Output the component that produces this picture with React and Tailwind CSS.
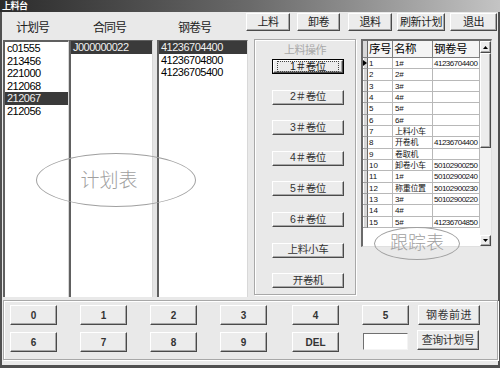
import React from "react";

const F = "font-['Liberation_Sans','Noto_Sans_CJK_SC',sans-serif]";

function Btn({ className = "", children }) {
  return (
    <div
      className={`flex items-center justify-center bg-[#ececec] border border-t-white border-l-white border-b-[#4a4a4a] border-r-[#4a4a4a] shadow-[inset_-1px_-1px_0_#a8a8a8] text-[#222] ${className}`}
    >
      {children}
    </div>
  );
}

const plans = ["c01555", "213456", "221000", "212068", "212067", "212056"];
const coils = ["41236704400", "41236704800", "41236705400"];

const rows = [
  ["1", "1#", "41236704400"],
  ["2", "2#", ""],
  ["3", "3#", ""],
  ["4", "4#", ""],
  ["5", "5#", ""],
  ["6", "6#", ""],
  ["7", "上料小车", ""],
  ["8", "开卷机", "41236704400"],
  ["9", "卷取机", ""],
  ["10", "卸卷小车", "50102900250"],
  ["11", "1#", "50102900240"],
  ["12", "称重位置", "50102900230"],
  ["13", "3#", "50102900220"],
  ["14", "4#", ""],
  ["15", "5#", "41236704850"],
];

function ListItem({ text, sel }) {
  return (
    <div
      className={`h-[12.5px] leading-[12.5px] pl-[2px] text-[11px] tracking-[-0.5px] ${
        sel ? "bg-[#3a3a3a] text-[#f0f0f0]" : "text-black"
      }`}
    >
      {text}
    </div>
  );
}

export default function App() {
  return (
    <div className={`relative w-[500px] h-[368px] overflow-hidden bg-[#e9e9e9] flex flex-col ${F}`}>
      {/* title bar */}
      <div className="h-[12px] shrink-0 bg-gradient-to-r from-[#2c2c2c] via-[#6a6a6a] to-[#c4c4c4] text-white text-[9px] font-bold leading-[12px] pl-[2px] tracking-[-0.5px]">
        上料台
      </div>

      <div className="flex-1 flex flex-col border-l-2 border-r-2 border-b-[3px] border-[#505050]">
        {/* main area */}
        <div className="flex h-[285px]">
          {/* left lists */}
          <div className="ml-[1px] w-[245px] flex flex-col">
            <div className="h-[28px] flex items-center pt-[3px] text-[12px] tracking-[-1px] text-[#222]">
              <div className="w-[66px] pl-[13px]">计划号</div>
              <div className="w-[88px] pl-[24px]">合同号</div>
              <div className="w-[91px] pl-[21px]">钢卷号</div>
            </div>
            <div className="flex h-[257px]">
              <div className="w-[66px] bg-white border-l-2 border-t-2 border-l-[#606060] border-t-[#606060] border-r border-r-[#d8d8d8]">
                {plans.map((p, i) => (
                  <ListItem key={p} text={p} sel={i === 4} />
                ))}
              </div>
              <div className="w-[84px] bg-white border-l-2 border-l-[#606060] border-t border-t-[#606060] border-r border-r-[#d8d8d8]">
                <ListItem text="J000000022" sel />
              </div>
              <div className="w-[4px] bg-[#e4e4e4]" />
              <div className="w-[91px] bg-white border-l-2 border-l-[#606060] border-t border-t-[#606060] border-r border-r-[#d8d8d8]">
                {coils.map((c, i) => (
                  <ListItem key={c} text={c} sel={i === 0} />
                ))}
              </div>
            </div>
          </div>

          {/* right side */}
          <div className="flex-1 flex flex-col">
            <div className="flex h-[18px] mt-[1px] ml-[-2px] text-[11px] tracking-[-0.5px]">
              <Btn className="w-[44px]">上料</Btn>
              <Btn className="w-[43px] ml-[7px]">卸卷</Btn>
              <Btn className="w-[44px] ml-[8px]">退料</Btn>
              <Btn className="w-[48px] ml-[5px]">刷新计划</Btn>
              <Btn className="w-[47px] ml-[5px]">退出</Btn>
            </div>

            <div className="flex mt-[8px] items-start">
              {/* group box */}
              <div className="ml-[6px] w-[102px] h-[256px] border border-[#a8a8a8] shadow-[inset_1px_1px_0_#fff,1px_1px_0_#fff] flex flex-col items-center">
                <div className="h-[19px] w-full flex items-center justify-center text-[11px] text-[#a8a8a8] tracking-[-0.5px] pt-[2px]">
                  上料操作
                </div>
                <div className="flex flex-col gap-[15.6px] text-[10.5px] tracking-[-0.3px] ml-[6px]">
                  <div className="w-[72px] h-[15px] border border-black">
                    <Btn className="w-full h-full relative">
                      <span className="absolute left-[3px] right-[3px] top-[0px] bottom-[0px] border border-dotted border-[#444]" />
                      <span>1＃卷位</span>
                    </Btn>
                  </div>
                  {["2＃卷位", "3＃卷位", "4＃卷位", "5＃卷位", "6＃卷位", "上料小车", "开卷机"].map((t) => (
                    <Btn key={t} className="w-[72px] h-[15px] text-[#333]">
                      {t}
                    </Btn>
                  ))}
                </div>
              </div>

              {/* grid */}
              <div className="ml-[5px] w-[131px] h-[208px] bg-white border-l-2 border-t-2 border-l-[#6a6a6a] border-t-[#6a6a6a] border-r border-b border-r-[#e0e0e0] border-b-[#e0e0e0] flex">
                <div className="w-[117px] flex flex-col">
                  <div className="flex h-[17px] text-[11.5px] tracking-[-0.5px] text-black border-b border-[#808080]">
                    <div className="w-[5px] bg-[#d8d8d8] border-r border-[#6a6a6a]" />
                    <div className="w-[25px] bg-[#f4f4f4] border-r border-[#808080] pl-[1px] leading-[16px]">序号</div>
                    <div className="w-[40px] bg-[#f4f4f4] border-r border-[#808080] pl-[1px] leading-[16px]">名称</div>
                    <div className="w-[47px] bg-[#f4f4f4] border-r border-[#808080] pl-[1px] leading-[16px]">钢卷号</div>
                  </div>
                  {rows.map((r, i) => (
                    <div key={i} className="flex h-[11.33px] text-[8px] leading-[11px] text-[#111]">
                      <div className="w-[5px] bg-[#d8d8d8] border-r border-[#6a6a6a] border-b border-b-[#a0a0a0] shadow-[inset_1px_0_0_#fff] flex items-center justify-center">
                        {i === 0 && (
                          <svg width="4" height="6" viewBox="0 0 4 6">
                            <path d="M0 0 L4 3 L0 6 Z" fill="#000" />
                          </svg>
                        )}
                      </div>
                      <div className="w-[25px] border-r border-b border-[#b8b8b8] pl-[1px]">{r[0]}</div>
                      <div className="w-[40px] border-r border-b border-[#b8b8b8] pl-[2px] tracking-[-0.3px]">{r[1]}</div>
                      <div className="w-[47px] border-r border-b border-[#b8b8b8] pl-[1px] tracking-[-0.5px]">{r[2]}</div>
                    </div>
                  ))}
                </div>
                {/* scrollbar */}
                <div className="w-[11px] flex flex-col bg-[#f0f0f0] ml-auto">
                  <Btn className="w-[11px] h-[12px]">
                    <svg width="5" height="3" viewBox="0 0 5 3">
                      <path d="M0 3 L2.5 0 L5 3 Z" fill="#000" />
                    </svg>
                  </Btn>
                  <Btn className="w-[11px] h-[95px]" />
                  <div className="flex-1 bg-[#f2f2f2]" />
                  <Btn className="w-[11px] h-[11px]">
                    <svg width="5" height="3" viewBox="0 0 5 3">
                      <path d="M0 0 L2.5 3 L5 0 Z" fill="#000" />
                    </svg>
                  </Btn>
                </div>
              </div>
            </div>
          </div>
        </div>

        {/* bottom panel */}
        <div className="ml-[1px] mt-[3px] w-[495px] h-[60px] border border-[#a8a8a8] shadow-[inset_1px_1px_0_#fff,1px_1px_0_#fff] flex flex-col text-[10px] font-bold">
          <div className="flex h-[20px] mt-[4px]">
            <Btn className="w-[47px] ml-[6px] text-[#333]">0</Btn>
            <Btn className="w-[47px] ml-[23px] text-[#333]">1</Btn>
            <Btn className="w-[47px] ml-[23px] text-[#333]">2</Btn>
            <Btn className="w-[47px] ml-[23px] text-[#333]">3</Btn>
            <Btn className="w-[47px] ml-[25px] text-[#333]">4</Btn>
            <Btn className="w-[47px] ml-[23px] text-[#333]">5</Btn>
            <Btn className="w-[62px] ml-[9px] font-normal text-[11px] tracking-[0.5px] text-[#333]">钢卷前进</Btn>
          </div>
          <div className="flex h-[20px] mt-[7px] items-start">
            <Btn className="w-[47px] h-[20px] ml-[6px] text-[#333]">6</Btn>
            <Btn className="w-[47px] h-[20px] ml-[23px] text-[#333]">7</Btn>
            <Btn className="w-[47px] h-[20px] ml-[23px] text-[#333]">8</Btn>
            <Btn className="w-[47px] h-[20px] ml-[23px] text-[#333]">9</Btn>
            <Btn className="w-[47px] h-[20px] ml-[25px] text-[#333]">DEL</Btn>
            <div className="w-[45px] h-[17px] ml-[24px] mt-[1px] bg-white border-l border-t border-[#707070] border-r border-b border-r-[#f4f4f4] border-b-[#f4f4f4]" />
            <Btn className="w-[62px] h-[20px] ml-[9px] mt-[-2px] font-normal text-[11px] tracking-[-0.5px] text-[#333]">查询计划号</Btn>
          </div>
        </div>
      </div>

      {/* overlay annotations */}
      <div className="absolute left-[36px] top-[153px] w-[160px] h-[54px] rounded-[50%] border border-[#a0a0a0] flex items-center justify-center">
        <span className="text-[19px] text-[#a0a0a0] font-light mt-[2px] ml-[-14px]">计划表</span>
      </div>
      <div className="absolute left-[374px] top-[227px] w-[86px] h-[33px] rounded-[50%] border border-[#a0a0a0] flex items-center justify-center">
        <span className="text-[18px] text-[#a0a0a0] font-light">跟踪表</span>
      </div>
    </div>
  );
}
